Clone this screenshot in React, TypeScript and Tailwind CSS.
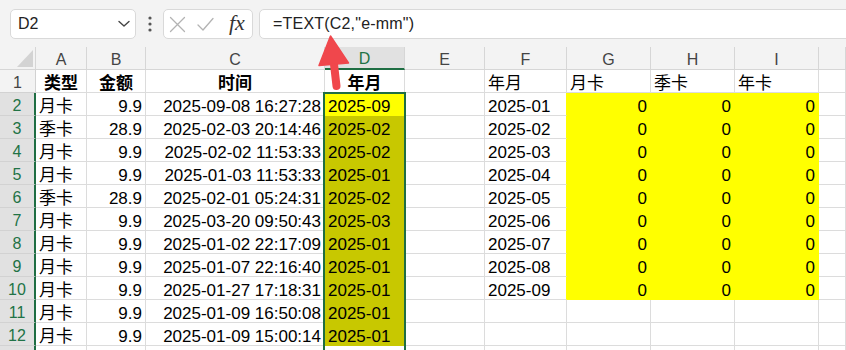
import React from 'react';

type Align = 'l' | 'r' | 'c';
type Fill = 'w' | 'y' | 'o';
interface CellDef {
  t?: string;
  a?: Align;
  b?: boolean;
  f?: Fill;
  noRight?: boolean;
}

const COLS = 'grid grid-cols-[36px_51px_59px_179px_80px_80px_82px_84px_84px_84px_1fr]';

const data: [string, string, string, string][] = [
  ['月卡', '9.9', '2025-09-08 16:27:28', '2025-09'],
  ['季卡', '28.9', '2025-02-03 20:14:46', '2025-02'],
  ['月卡', '9.9', '2025-02-02 11:53:33', '2025-02'],
  ['月卡', '9.9', '2025-01-03 11:53:33', '2025-01'],
  ['季卡', '28.9', '2025-02-01 05:24:31', '2025-02'],
  ['月卡', '9.9', '2025-03-20 09:50:43', '2025-03'],
  ['月卡', '9.9', '2025-01-02 22:17:09', '2025-01'],
  ['月卡', '9.9', '2025-01-07 22:16:40', '2025-01'],
  ['月卡', '9.9', '2025-01-27 17:18:31', '2025-01'],
  ['月卡', '9.9', '2025-01-09 16:50:08', '2025-01'],
  ['月卡', '9.9', '2025-01-09 15:00:14', '2025-01'],
];

const months = ['2025-01', '2025-02', '2025-03', '2025-04', '2025-05', '2025-06', '2025-07', '2025-08', '2025-09'];

const fillCls: Record<Fill, string> = {
  w: 'bg-white border-[#dcdcdc]',
  y: 'bg-[#ffff00] border-[#ffff00]',
  o: 'bg-[#c8c800] border-[#c8c800]',
};
const alignCls: Record<Align, string> = {
  l: 'justify-start',
  r: 'justify-end',
  c: 'justify-center',
};

function Cell({ d }: { d: CellDef }) {
  const f = d.f ?? 'w';
  return (
    <div
      className={`h-[23px] border-b border-r flex items-end px-[3px] leading-[17px] text-[17px] text-black whitespace-nowrap overflow-hidden ${fillCls[f]} ${alignCls[d.a ?? 'l']} ${d.b ? 'font-bold' : ''} ${d.noRight ? 'border-r-[#ffff00]' : ''}`}
    >
      {d.t}
    </div>
  );
}

function RowHead({ n, sel }: { n: number; sel: boolean }) {
  return (
    <div
      className={`h-[23px] border-b flex items-end justify-center leading-[16px] text-[16px] ${
        sel
          ? 'bg-[#e1e1e1] text-[#217346] border-[#d2d2d2] border-r-2 border-r-[#1f6e43]'
          : 'bg-[#f3f3f3] text-[#444] border-[#d2d2d2] border-r'
      }`}
    >
      <span className="pb-[1px]">{n <= 12 ? n : ''}</span>
    </div>
  );
}

function ColHead({ l, sel }: { l: string; sel?: boolean }) {
  return (
    <div
      className={`h-[23px] flex items-end justify-center leading-[16px] text-[16px] border-r border-[#d6d6d6] ${
        sel ? 'bg-[#e1e1e1] text-[#217346] border-b-2 border-b-[#1f6e43]' : 'bg-[#f3f3f3] text-[#444] border-b'
      }`}
    >
      <span className="pb-[1px]">{l}</span>
    </div>
  );
}

function buildRow(r: number): CellDef[] {
  if (r === 1) {
    return [
      { t: '类型', a: 'c', b: true },
      { t: '金额', a: 'c', b: true },
      { t: '时间', a: 'c', b: true },
      { t: '年月', a: 'c', b: true },
      {},
      { t: '年月' },
      { t: '月卡' },
      { t: '季卡' },
      { t: '年卡' },
      {},
    ];
  }
  const d = data[r - 2];
  const inYellow = r >= 2 && r <= 10;
  const cells: CellDef[] = [
    { t: d ? d[0] : '' },
    { t: d ? d[1] : '', a: 'r' },
    { t: d ? d[2] : '', a: 'r' },
    { t: d ? d[3] : '', f: d ? (r === 2 ? 'y' : 'o') : 'w' },
    {},
    { t: inYellow ? months[r - 2] : '', noRight: inYellow },
    { t: inYellow ? '0' : '', a: 'r', f: inYellow ? 'y' : 'w' },
    { t: inYellow ? '0' : '', a: 'r', f: inYellow ? 'y' : 'w' },
    { t: inYellow ? '0' : '', a: 'r', f: inYellow ? 'y' : 'w' },
    {},
  ];
  return cells;
}

export default function App() {
  const rows = Array.from({ length: 13 }, (_, i) => i + 1);
  return (
    <div className="relative w-[846px] h-[350px] overflow-hidden bg-white font-['Liberation_Sans','Noto_Sans_CJK_SC',sans-serif]">
      {/* Formula bar */}
      <div className="h-[47px] bg-[#f3f3f3] flex items-start pt-[9px]">
        <div className="ml-[10px] w-[126px] h-[30px] rounded-[5px] border border-[#d9d9d9] bg-white flex items-center justify-between pl-[7px] pr-[5px]">
          <span className="text-[16px] text-[#222] leading-none">D2</span>
          <svg width="12" height="8" viewBox="0 0 12 8" fill="none">
            <path d="M1 1.5 L6 6 L11 1.5" stroke="#444" strokeWidth="1.4" strokeLinecap="round" strokeLinejoin="round" />
          </svg>
        </div>
        <div className="w-[27px] h-[30px] flex items-center justify-center">
          <svg width="4" height="16" viewBox="0 0 4 16">
            <circle cx="2" cy="2" r="1.6" fill="#555" />
            <circle cx="2" cy="8" r="1.6" fill="#555" />
            <circle cx="2" cy="14" r="1.6" fill="#555" />
          </svg>
        </div>
        <div className="w-[90px] h-[30px] rounded-[5px] border border-[#d9d9d9] bg-white flex items-center pl-[5px]">
          <svg width="17" height="17" viewBox="0 0 17 17" fill="none">
            <path d="M1.5 1.5 L15.5 15.5 M15.5 1.5 L1.5 15.5" stroke="#b3b3b3" strokeWidth="1.3" strokeLinecap="round" />
          </svg>
          <svg className="ml-[11px]" width="17" height="15" viewBox="0 0 17 15" fill="none">
            <path d="M1 8 L6 13 L16 1.5" stroke="#b3b3b3" strokeWidth="1.3" strokeLinecap="round" strokeLinejoin="round" />
          </svg>
          <span className="ml-[15px] font-['Liberation_Serif',serif] italic text-[22px] leading-none text-[#333] -mt-[3px]">
            fx
          </span>
        </div>
        <div className="ml-[6px] flex-1 -mr-[8px] h-[30px] rounded-[5px] border border-[#d9d9d9] bg-white flex items-center pl-[13px]">
          <span className="text-[16px] text-[#222] leading-none tracking-[0.2px]">=TEXT(C2,"e-mm")</span>
        </div>
      </div>

      {/* Grid */}
      <div className={COLS}>
        <div className="h-[23px] bg-[#f3f3f3] border-b border-r border-[#d6d6d6] relative">
          <svg className="absolute left-0 top-0" width="36" height="23" viewBox="0 0 36 23">
            <polygon points="33,3 33,20 17,20" fill="#d3d3d3" />
          </svg>
        </div>
        {['A', 'B', 'C', 'D', 'E', 'F', 'G', 'H', 'I', 'J'].map((l) => (
          <ColHead key={l} l={l === 'J' ? '' : l} sel={l === 'D'} />
        ))}
        {rows.map((r) => (
          <React.Fragment key={r}>
            <RowHead n={r} sel={r >= 2} />
            {buildRow(r).map((c, i) => (
              <Cell key={i} d={c} />
            ))}
          </React.Fragment>
        ))}
      </div>

      {/* Selection outline D2:D12 */}
      <div className="absolute left-[323px] top-[92px] w-[83px] h-[270px] border-2 border-[#1f6e43] pointer-events-none" />

      {/* Red arrow annotation */}
      <svg className="absolute left-0 top-0 pointer-events-none" width="846" height="350" viewBox="0 0 846 350">
        <line x1="333.5" y1="60" x2="336.5" y2="86" stroke="#f0474c" strokeWidth="8" strokeLinecap="round" />
        <polygon points="330.5,36 319,65.5 348.5,63" fill="#f0474c" strokeLinejoin="round" stroke="#f0474c" strokeWidth="1.5" />
      </svg>
    </div>
  );
}
